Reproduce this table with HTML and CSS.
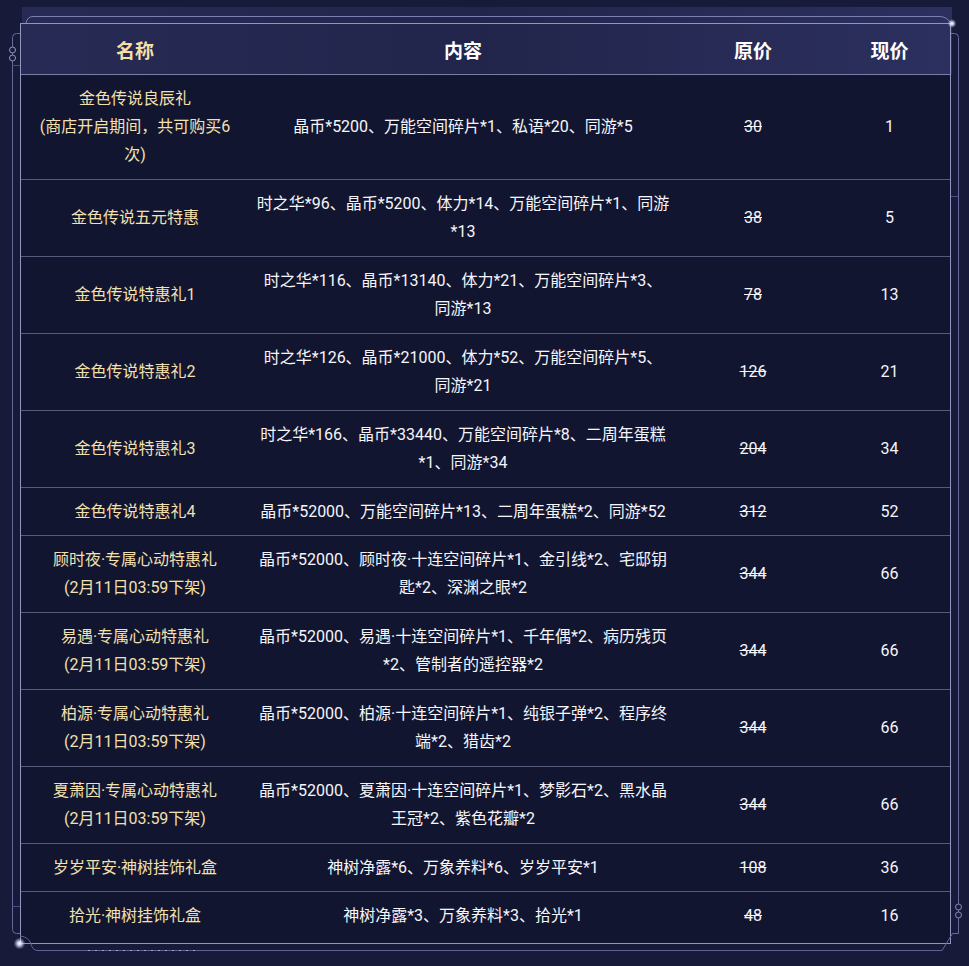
FILE: index.html
```html
<!DOCTYPE html>
<html lang="zh-CN">
<head>
<meta charset="utf-8">
<title>礼包列表</title>
<link rel="stylesheet" href="styles.css">
</head>
<body>
<div class="page">
  <div class="board">
    <table class="gifts">
      <colgroup>
        <col class="c-name">
        <col class="c-content">
        <col class="c-orig">
        <col class="c-now">
      </colgroup>
      <thead>
        <tr><th class="h-name">名称</th><th>内容</th><th>原价</th><th>现价</th></tr>
      </thead>
      <tbody>
        <tr><td class="name">金色传说良辰礼<br>(商店开启期间，共可购买6次)</td><td class="content">晶币*5200、万能空间碎片*1、私语*20、同游*5</td><td class="orig">30</td><td class="now">1</td></tr>
        <tr><td class="name">金色传说五元特惠</td><td class="content">时之华*96、晶币*5200、体力*14、万能空间碎片*1、同游*13</td><td class="orig">38</td><td class="now">5</td></tr>
        <tr><td class="name">金色传说特惠礼1</td><td class="content">时之华*116、晶币*13140、体力*21、万能空间碎片*3、同游*13</td><td class="orig">78</td><td class="now">13</td></tr>
        <tr><td class="name">金色传说特惠礼2</td><td class="content">时之华*126、晶币*21000、体力*52、万能空间碎片*5、同游*21</td><td class="orig">126</td><td class="now">21</td></tr>
        <tr><td class="name">金色传说特惠礼3</td><td class="content">时之华*166、晶币*33440、万能空间碎片*8、二周年蛋糕*1、同游*34</td><td class="orig">204</td><td class="now">34</td></tr>
        <tr class="single"><td class="name">金色传说特惠礼4</td><td class="content">晶币*52000、万能空间碎片*13、二周年蛋糕*2、同游*52</td><td class="orig">312</td><td class="now">52</td></tr>
        <tr><td class="name">顾时夜·专属心动特惠礼<br>(2月11日03:59下架)</td><td class="content">晶币*52000、顾时夜·十连空间碎片*1、金引线*2、宅邸钥匙*2、深渊之眼*2</td><td class="orig">344</td><td class="now">66</td></tr>
        <tr><td class="name">易遇·专属心动特惠礼<br>(2月11日03:59下架)</td><td class="content">晶币*52000、易遇·十连空间碎片*1、千年偶*2、病历残页*2、管制者的遥控器*2</td><td class="orig">344</td><td class="now">66</td></tr>
        <tr><td class="name">柏源·专属心动特惠礼<br>(2月11日03:59下架)</td><td class="content">晶币*52000、柏源·十连空间碎片*1、纯银子弹*2、程序终端*2、猎齿*2</td><td class="orig">344</td><td class="now">66</td></tr>
        <tr><td class="name">夏萧因·专属心动特惠礼<br>(2月11日03:59下架)</td><td class="content">晶币*52000、夏萧因·十连空间碎片*1、梦影石*2、黑水晶王冠*2、紫色花瓣*2</td><td class="orig">344</td><td class="now">66</td></tr>
        <tr class="single"><td class="name">岁岁平安·神树挂饰礼盒</td><td class="content">神树净露*6、万象养料*6、岁岁平安*1</td><td class="orig">108</td><td class="now">36</td></tr>
        <tr class="single"><td class="name">拾光·神树挂饰礼盒</td><td class="content">神树净露*3、万象养料*3、拾光*1</td><td class="orig">48</td><td class="now">16</td></tr>
      </tbody>
    </table>
  </div>

  <svg class="deco" width="969" height="966" viewBox="0 0 969 966" aria-hidden="true">
    <defs>
      <linearGradient id="band" x1="0" y1="0" x2="1" y2="0">
        <stop offset="0" stop-color="#272a54"/>
        <stop offset="0.5" stop-color="#22254b"/>
        <stop offset="1" stop-color="#2c305f"/>
      </linearGradient>
      <radialGradient id="glow">
        <stop offset="0" stop-color="#ffffff" stop-opacity="1"/>
        <stop offset="0.35" stop-color="#e6e8ff" stop-opacity="0.85"/>
        <stop offset="1" stop-color="#a9aee0" stop-opacity="0"/>
      </radialGradient>
    </defs>
    <!-- header band top part -->
    <rect x="22" y="7" width="930" height="16" fill="url(#band)"/>
    <rect x="951" y="23" width="1" height="51" fill="#2c305f"/>
    <!-- outer top line -->
    <path d="M26 23 Q27.5 16.5 33 16.5 H940 Q946 16.5 951 23" fill="none" stroke="#7b7fb0" stroke-width="1"/>
    <!-- left outer line -->
    <path d="M20 33.5 H16.5 Q12.5 33.5 12.5 37.5 V929.5 Q12.5 933.5 16.5 933.5 H20" fill="none" stroke="#666a9a" stroke-width="1"/>
    <circle cx="12.5" cy="50" r="3" fill="#1a1c3c" stroke="#9397c4" stroke-width="1"/>
    <circle cx="12.5" cy="58" r="3" fill="#1a1c3c" stroke="#9397c4" stroke-width="1"/>
    <line x1="12" y1="65.5" x2="20" y2="65.5" stroke="#4c5080" stroke-width="1"/>
    <line x1="12" y1="906.5" x2="20" y2="906.5" stroke="#4c5080" stroke-width="1"/>
    <!-- right outer line -->
    <path d="M951 33.5 H954.5 Q958.5 33.5 958.5 37.5 V933.5 H952.5 L942 950.5" fill="none" stroke="#666a9a" stroke-width="1"/>
    <circle cx="958.5" cy="907" r="3" fill="#1a1c3c" stroke="#8589b8" stroke-width="1"/>
    <circle cx="958.5" cy="915" r="3" fill="#1a1c3c" stroke="#8589b8" stroke-width="1"/>
    <line x1="951" y1="196.5" x2="958" y2="196.5" stroke="#4c5080" stroke-width="1"/>
    <!-- bottom outer line -->
    <path d="M20 936 Q29 937 31 944 Q32.5 950.5 38 950.5 H942" fill="none" stroke="#5f6394" stroke-width="1"/>
    <line x1="88" y1="950.5" x2="200" y2="950.5" stroke="#a3a7d6" stroke-width="1.2" stroke-dasharray="2 5"/>
    <!-- glows -->
    <circle cx="19.5" cy="943.5" r="6" fill="url(#glow)"/>
    <circle cx="952" cy="23.5" r="4.5" fill="url(#glow)"/>
  </svg>
</div>
</body>
</html>
```
FILE: styles.css
```css
html, body {
  margin: 0;
  padding: 0;
  background: #181a39;
}

body {
  font-family: Roboto, "Noto Sans CJK SC", sans-serif;
  color: #f4f4f8;
}

.page {
  position: relative;
  width: 969px;
  height: 966px;
  padding-top: 23px;
  box-sizing: border-box;
  overflow: hidden;
}

.board {
  margin-left: 20px;
  width: 931px;
  height: 921px;
  box-sizing: border-box;
  border: 1px solid #9195c0;
  background:
    linear-gradient(90deg, #272a54 0%, #22254b 50%, #2c305f 100%) top left / 100% 50px no-repeat,
    #121530;
}

.gifts {
  width: 100%;
  border-collapse: separate;
  border-spacing: 0;
  table-layout: fixed;
}

.c-name { width: 228px; }
.c-content { width: 428px; }
.c-orig { width: 152px; }
.c-now { width: 121px; }

.gifts th {
  padding: 14px 6px 8px;
  line-height: 28px;
  font-size: 19px;
  font-weight: 700;
  color: #ffffff;
  text-align: center;
  background: transparent;
  border-bottom: 1px solid #7c7fa4;
}

.gifts th.h-name {
  color: #f6dfa5;
}

.gifts td {
  padding: 10px 6px;
  line-height: 28px;
  font-size: 16px;
  text-align: center;
  vertical-align: middle;
  border-bottom: 1px solid #575a7a;
}

.gifts tr.single td {
  padding-bottom: 9px;
}

.gifts tbody tr:last-child td {
  border-bottom: none;
}

.gifts td.name {
  padding-left: 12px;
  padding-right: 12px;
  color: #f2e0ae;
}

.gifts td.content {
  padding-left: 7.25px;
  padding-right: 7.25px;
  color: #f6f6fa;
}

.gifts td.orig {
  color: #f4f4f8;
  text-decoration: line-through;
}

.gifts td.now {
  color: #f6f6fa;
}

.deco {
  position: absolute;
  left: 0;
  top: 0;
  pointer-events: none;
}
```
